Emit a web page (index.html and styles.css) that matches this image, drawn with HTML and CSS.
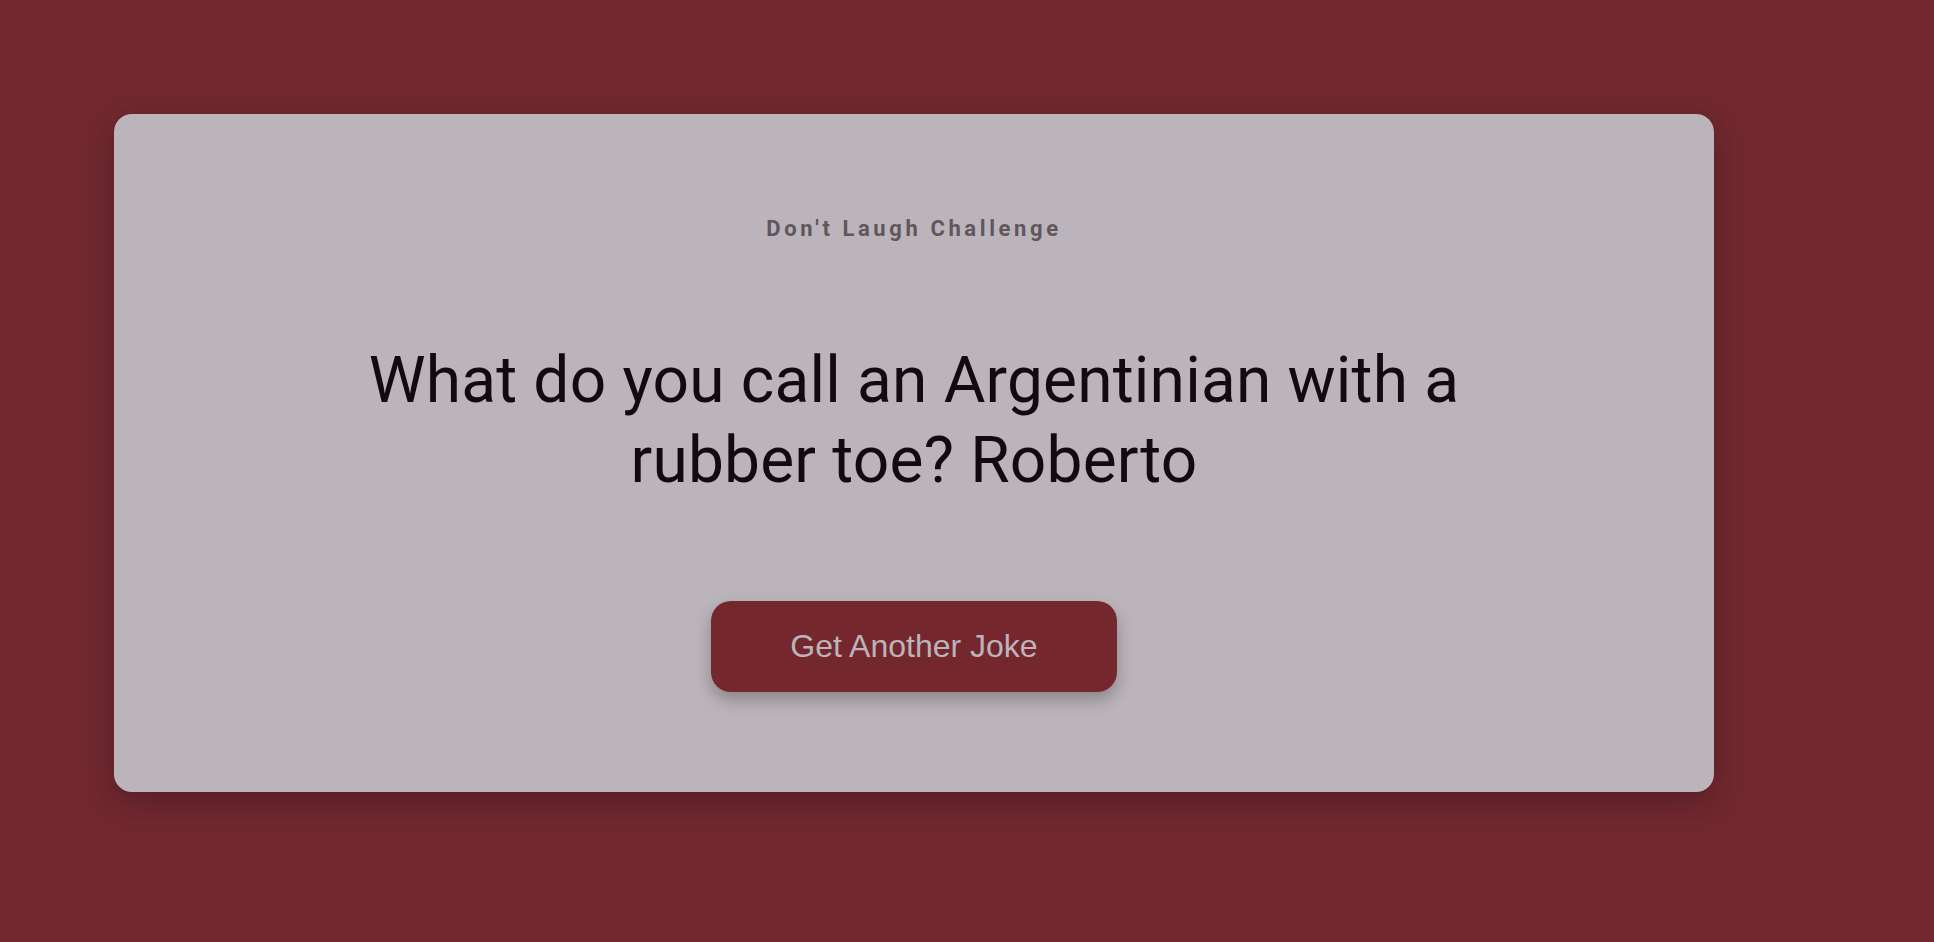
FILE: index.html
```html
<!DOCTYPE html>
<html lang="en">
<head>
<meta charset="utf-8">
<title>Don't Laugh Challenge</title>
<link rel="stylesheet" href="styles.css">
</head>
<body>
  <main class="card">
    <h1 class="title">Don't Laugh Challenge</h1>
    <p class="joke">What do you call an Argentinian with a rubber toe? Roberto</p>
    <button class="btn" type="button">Get Another Joke</button>
  </main>
</body>
</html>
```

FILE: styles.css
```css
html, body {
  margin: 0;
  padding: 0;
}
body {
  background: #722830;
  min-height: 942px;
  font-family: Roboto, "Liberation Sans", sans-serif;
  padding: 114px 0 0 114px;
  box-sizing: border-box;
}
.card {
  width: 1600px;
  box-sizing: border-box;
  background: #bbb4ba;
  border-radius: 18px;
  box-shadow: 0 10px 30px rgba(0, 0, 0, 0.25);
  padding: 102px 40px 100px;
  display: flex;
  flex-direction: column;
  align-items: center;
}
.title {
  margin: 0;
  font-family: Roboto, sans-serif;
  font-size: 22px;
  font-weight: 700;
  letter-spacing: 3.6px;
  color: #5f565e;
  line-height: normal;
}
.joke {
  margin: 100px 0 0;
  max-width: 1140px;
  text-align: center;
  font-family: Roboto, sans-serif;
  font-size: 64px;
  font-weight: 400;
  line-height: 80px;
  letter-spacing: 0.2px;
  color: #110b10;
}
.btn {
  margin-top: 100px;
  font-family: "Liberation Sans", Arial, sans-serif;
  font-size: 32px;
  line-height: 37px;
  padding: 27px 79px;
  color: #bbb4ba;
  background: #74282e;
  border: none;
  border-radius: 20px;
  box-shadow: 0 8px 16px rgba(0, 0, 0, 0.25);
  cursor: pointer;
}
```
